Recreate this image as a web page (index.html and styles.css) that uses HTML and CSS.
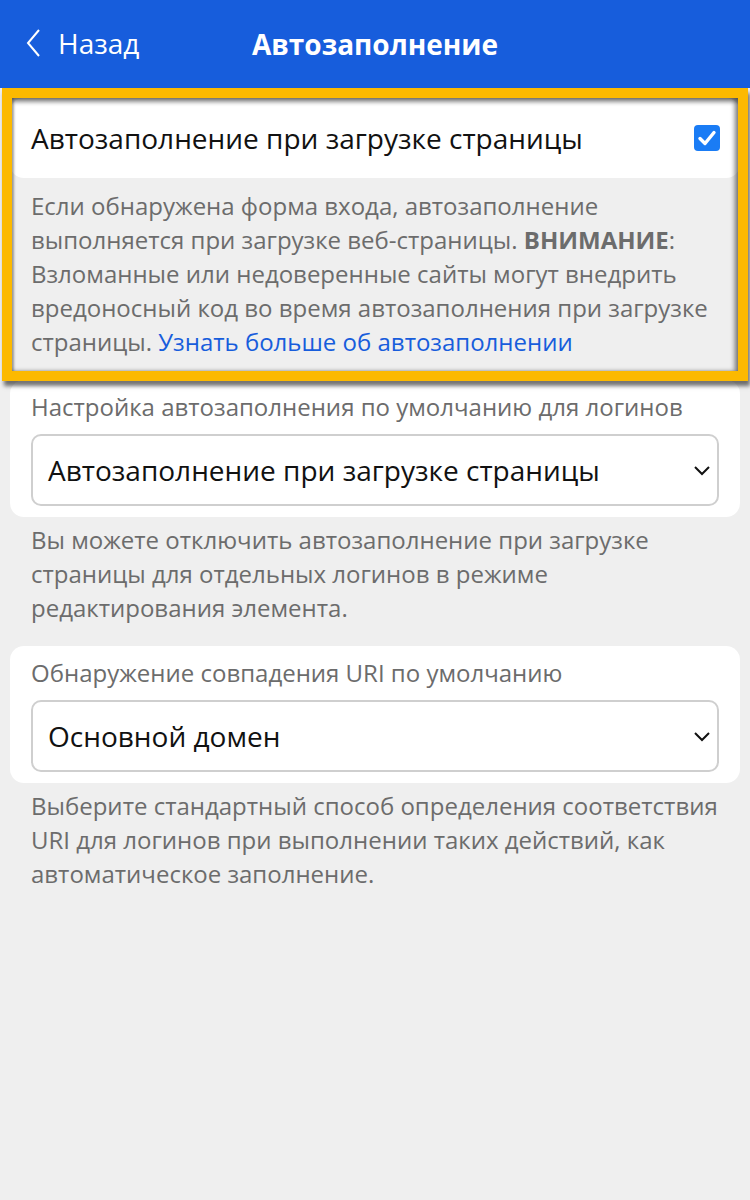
FILE: index.html
```html
<!DOCTYPE html>
<html lang="ru">
<head>
<meta charset="utf-8">
<title>Автозаполнение</title>
<link rel="stylesheet" href="styles.css">
</head>
<body>
<header class="topbar">
  <div class="back">
    <svg class="back-icon" width="16" height="30" viewBox="0 0 16 30"><polyline points="13,2 2,15 13,28" fill="none" stroke="#fff" stroke-width="2"/></svg>
    <span>Назад</span>
  </div>
  <h1 class="title">Автозаполнение</h1>
</header>
<main class="content">
  <div class="card card-row">
    <span class="row-label">Автозаполнение при загрузке страницы</span>
    <span class="checkbox">
      <svg width="26" height="26" viewBox="0 0 26 26"><polyline points="6,13.5 11,18.5 20,7.5" fill="none" stroke="#fff" stroke-width="3.4" stroke-linecap="round" stroke-linejoin="round"/></svg>
    </span>
  </div>
  <p class="desc desc-first">Если обнаружена форма входа, автозаполнение выполняется при загрузке веб-страницы. <b>ВНИМАНИЕ</b>: Взломанные или недоверенные сайты могут внедрить вредоносный код во время автозаполнения при загрузке страницы. <a class="link" href="#">Узнать больше об автозаполнении</a></p>

  <div class="card card-field card-second">
    <div class="field-label">Настройка автозаполнения по умолчанию для логинов</div>
    <div class="select">
      <span>Автозаполнение при загрузке страницы</span>
      <svg class="chev" width="18" height="12" viewBox="0 0 18 12"><polyline points="2,3 9,10 16,3" fill="none" stroke="#111" stroke-width="2"/></svg>
    </div>
  </div>
  <p class="desc">Вы можете отключить автозаполнение при загрузке страницы для отдельных логинов в режиме редактирования элемента.</p>

  <div class="card card-field">
    <div class="field-label">Обнаружение совпадения URI по умолчанию</div>
    <div class="select">
      <span>Основной домен</span>
      <svg class="chev" width="18" height="12" viewBox="0 0 18 12"><polyline points="2,3 9,10 16,3" fill="none" stroke="#111" stroke-width="2"/></svg>
    </div>
  </div>
  <p class="desc">Выберите стандартный способ определения соответствия URI для логинов при выполнении таких действий, как автоматическое заполнение.</p>

  <div class="highlight"></div>
</main>
</body>
</html>
```

FILE: styles.css
```css
* { box-sizing: border-box; }
html, body { margin: 0; padding: 0; }
body {
  background: #efefef;
  font-family: "Open Sans", "Noto Sans", sans-serif;
  width: 750px;
  min-height: 1200px;
}
.topbar {
  position: relative;
  height: 88px;
  background: #175ddc;
  display: flex;
  align-items: center;
  color: #fff;
}
.back {
  display: flex;
  align-items: center;
  gap: 16px;
  padding-left: 26px;
  font-size: 28px;
  line-height: 1;
  padding-bottom: 2px;
}
.back-icon { display: block; }
.title {
  position: absolute;
  left: 0;
  right: 0;
  top: 0;
  margin: 0;
  text-align: center;
  line-height: 88px;
  font-size: 28px;
  font-weight: 700;
  pointer-events: none;
}
.content {
  position: relative;
  padding: 10px 10px 0;
}
.card {
  background: #fff;
  border-radius: 14px;
}
.card-row {
  height: 80px;
  display: flex;
  align-items: center;
  justify-content: space-between;
  padding: 0 20px 0 21px;
}
.row-label {
  font-size: 28px;
  color: #111;
}
.checkbox {
  width: 26px;
  height: 26px;
  border-radius: 4px;
  background: #1a7cf5;
  display: block;
}
.checkbox svg { display: block; }
.desc {
  margin: 0;
  padding: 6px 21px 21px;
  font-size: 24px;
  line-height: 34px;
  color: #6c6c6c;
}
.desc-first { padding-top: 11px; }
.desc b { font-weight: 700; }
.link { color: #175ddc; text-decoration: none; }
.card-field {
  padding: 10px 21px 11px;
}
.field-label {
  font-size: 24px;
  line-height: 34px;
  color: #6c6c6c;
}
.select {
  margin-top: 10px;
  height: 72px;
  border: 2px solid #cfcfcf;
  border-radius: 10px;
  display: flex;
  align-items: center;
  justify-content: space-between;
  padding: 0 6px 0 15px;
  font-size: 28px;
  color: #111;
}
.chev { display: block; }
.highlight {
  position: absolute;
  left: 2px;
  top: 0;
  width: 746px;
  height: 293px;
  border: 10px solid #fcb900;
  box-shadow: 2px 5px 4px rgba(0,0,0,0.55), inset 0 4px 4px rgba(0,0,0,0.45), inset -4px 0 4px rgba(0,0,0,0.35), inset 2px 0 2px rgba(0,0,0,0.2);
  pointer-events: none;
}
```
